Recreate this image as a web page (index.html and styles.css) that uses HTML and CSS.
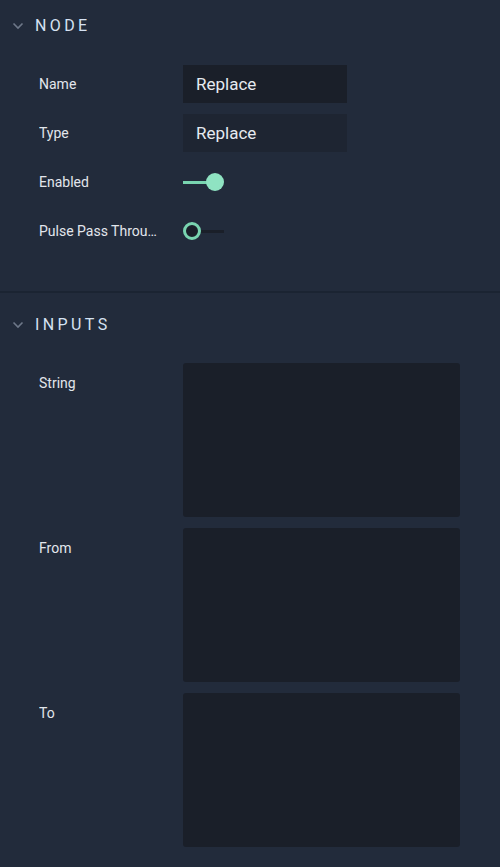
FILE: index.html
```html
<!DOCTYPE html>
<html>
<head>
<meta charset="utf-8">
<link rel="stylesheet" href="styles.css">
</head>
<body>
<div class="panel">
  <section class="section section-node">
    <div class="section-header">
      <svg class="chevron" width="12" height="8" viewBox="0 0 12 8"><path d="M1.5 1.5 L6 6 L10.5 1.5" fill="none" stroke="#6e7889" stroke-width="1.6"/></svg>
      <span class="section-title">NODE</span>
    </div>
    <div class="rows">
      <div class="row">
        <div class="label">Name</div>
        <div class="field field-dark">Replace</div>
      </div>
      <div class="row">
        <div class="label">Type</div>
        <div class="field field-muted">Replace</div>
      </div>
      <div class="row">
        <div class="label">Enabled</div>
        <div class="toggle toggle-on"><span class="track"></span><span class="knob"></span></div>
      </div>
      <div class="row">
        <div class="label">Pulse Pass Through</div>
        <div class="toggle toggle-off"><span class="knob"></span><span class="track"></span></div>
      </div>
    </div>
  </section>
  <div class="divider"></div>
  <section class="section section-inputs">
    <div class="section-header">
      <svg class="chevron" width="12" height="8" viewBox="0 0 12 8"><path d="M1.5 1.5 L6 6 L10.5 1.5" fill="none" stroke="#6e7889" stroke-width="1.6"/></svg>
      <span class="section-title">INPUTS</span>
    </div>
    <div class="inputs">
      <div class="input-row">
        <div class="label label-top">String</div>
        <div class="textbox"></div>
      </div>
      <div class="input-row">
        <div class="label label-top">From</div>
        <div class="textbox"></div>
      </div>
      <div class="input-row">
        <div class="label label-top">To</div>
        <div class="textbox"></div>
      </div>
    </div>
  </section>
</div>
</body>
</html>
```
FILE: styles.css
```css
html, body {
  margin: 0;
  padding: 0;
  background: #222b3b;
}
body {
  font-family: Roboto, "Noto Sans", sans-serif;
  color: #e2e6ec;
  width: 500px;
  height: 867px;
  overflow: hidden;
}
.panel {
  display: flex;
  flex-direction: column;
}
.section-header {
  height: 50px;
  display: flex;
  align-items: center;
  padding-left: 12px;
}
.chevron {
  margin-right: 11px;
  margin-top: 1px;
}
.section-title {
  font-size: 16px;
  letter-spacing: 3.4px;
  color: #d6e2f2;
  font-weight: 400;
}
.section-node {
  padding-bottom: 41px;
}
.rows {
  display: flex;
  flex-direction: column;
  gap: 11px;
  padding-top: 15px;
}
.row {
  display: flex;
  align-items: center;
  height: 38px;
}
.label {
  width: 122px;
  margin-left: 39px;
  margin-right: 22px;
  font-size: 14px;
  color: #e2e6ec;
  white-space: nowrap;
  overflow: hidden;
  text-overflow: ellipsis;
}
.field {
  width: 151px;
  height: 38px;
  padding-left: 13px;
  display: flex;
  align-items: center;
  font-size: 17px;
  color: #e6eaf0;
}
.field-dark {
  background: #1a1f29;
}
.field-muted {
  background: #1e2532;
}
.toggle {
  display: flex;
  align-items: center;
  width: 42px;
  height: 20px;
}
.toggle-on .track {
  width: 26px;
  height: 3px;
  background: #79d4b0;
  margin-right: -3px;
}
.toggle-on .knob {
  width: 18px;
  height: 18px;
  border-radius: 50%;
  background: #8fe3c2;
}
.toggle-off .knob {
  width: 12px;
  height: 12px;
  border-radius: 50%;
  border: 3px solid #79d4b0;
  background: #1a1f29;
}
.toggle-off .track {
  width: 23px;
  height: 3px;
  background: #1a1f29;
}
.divider {
  height: 2px;
  background: #1b2432;
}
.section-inputs .section-header {
  margin-top: 6px;
}
.inputs {
  display: flex;
  flex-direction: column;
  gap: 11px;
  padding-top: 14px;
}
.input-row {
  display: flex;
  align-items: flex-start;
}
.label-top {
  padding-top: 12px;
}
.textbox {
  width: 277px;
  height: 154px;
  background: #1a1f29;
  border-radius: 3px;
}
```
